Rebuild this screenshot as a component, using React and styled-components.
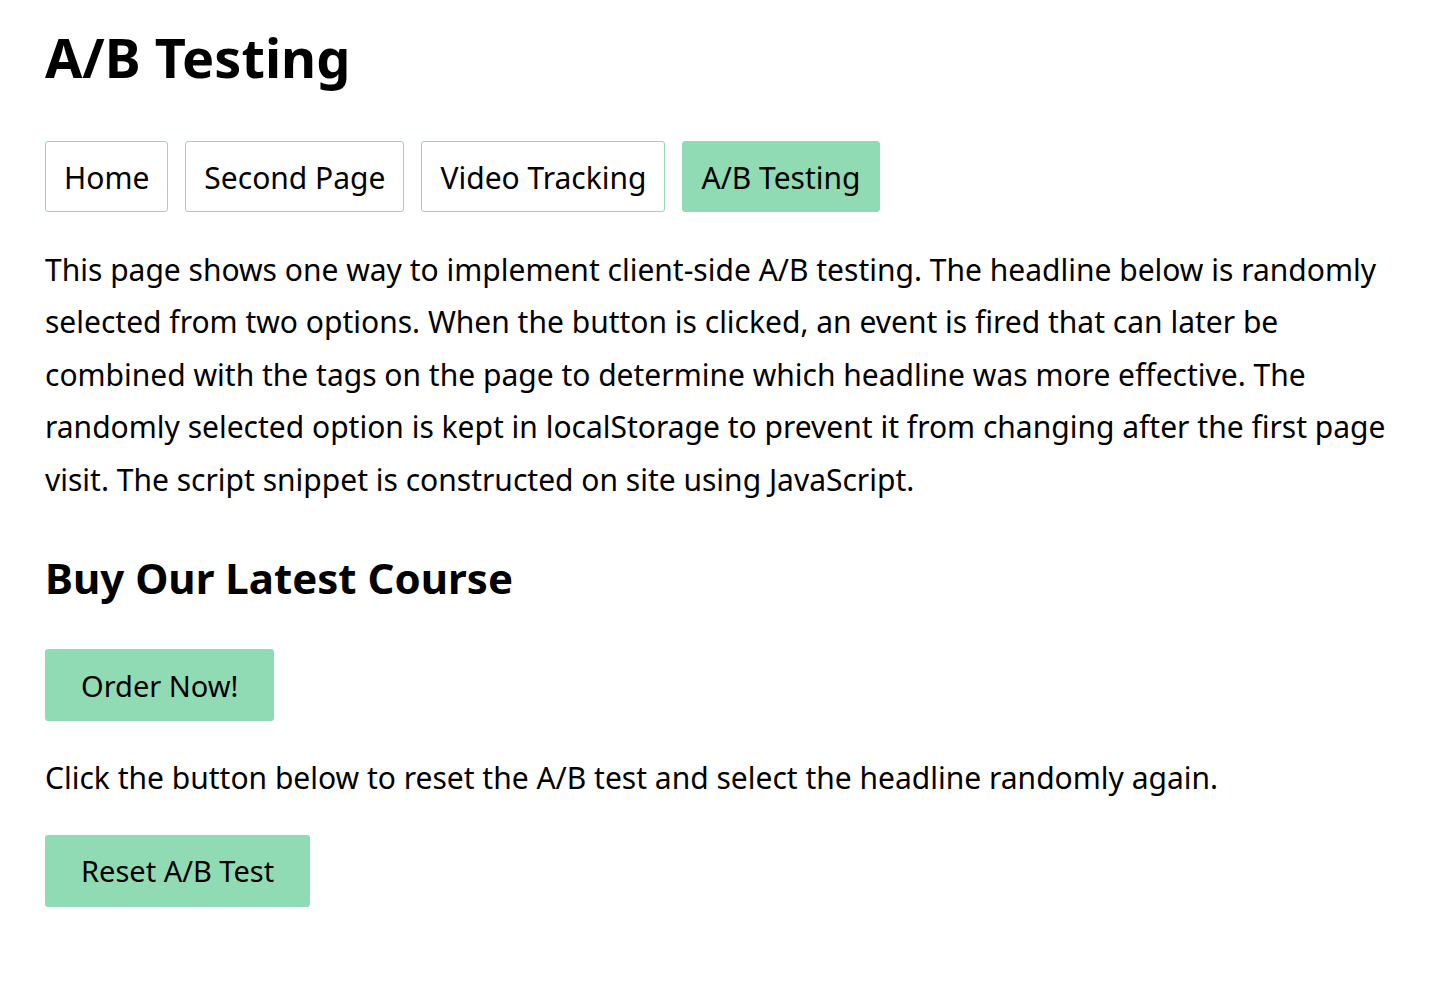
import React from "react";
import styled, { createGlobalStyle } from "styled-components";

const GlobalStyle = createGlobalStyle`
  html, body {
    margin: 0;
    padding: 0;
    background: #fff;
  }
  body {
    font-family: "Noto Sans", sans-serif;
    font-size: 30px;
    color: #000;
  }
`;

const Page = styled.div`
  padding: 25px 45px 0;
`;

const Title = styled.h1`
  font-size: 1.8em;
  font-weight: 700;
  margin: 0;
  line-height: 1.2;
`;

const Nav = styled.nav`
  display: flex;
  gap: 17px;
  margin-top: 51px;
`;

const NavLink = styled.a`
  display: inline-block;
  padding: 0 18px;
  height: 71px;
  line-height: 71px;
  border: 1px solid #91dbb4;
  border-radius: 3px;
  background: ${({ $active }) => ($active ? "#91dbb4" : "#fff")};
  color: #000;
  text-decoration: none;
  box-sizing: border-box;
`;

const Text = styled.p`
  margin: 0;
  line-height: 1.75;
  margin-top: ${({ $top }) => $top || 0}px;
`;

const Heading = styled.h2`
  font-size: 1.4em;
  font-weight: 700;
  margin: 43px 0 0;
  line-height: 1.4;
`;

const Button = styled.button`
  display: block;
  font-family: inherit;
  font-size: 29px;
  color: #000;
  background: #91dbb4;
  border: none;
  border-radius: 3px;
  height: 72px;
  padding: 0 36px;
  margin-top: ${({ $top }) => $top}px;
  cursor: pointer;
`;

const pages = ["Home", "Second Page", "Video Tracking", "A/B Testing"];

export default function App() {
  return (
    <Page>
      <GlobalStyle />
      <Title>A/B Testing</Title>
      <Nav>
        {pages.map((p) => (
          <NavLink key={p} href="#" $active={p === "A/B Testing"}>
            {p}
          </NavLink>
        ))}
      </Nav>
      <Text $top={32}>
        This page shows one way to implement client-side A/B testing. The
        headline below is randomly selected from two options. When the button
        is clicked, an event is fired that can later be combined with the tags
        on the page to determine which headline was more effective. The
        randomly selected option is kept in localStorage to prevent it from
        changing after the first page visit. The script snippet is constructed
        on site using JavaScript.
      </Text>
      <Heading>Buy Our Latest Course</Heading>
      <Button $top={41}>Order Now!</Button>
      <Text $top={31}>
        Click the button below to reset the A/B test and select the headline
        randomly again.
      </Text>
      <Button $top={30}>Reset A/B Test</Button>
    </Page>
  );
}
